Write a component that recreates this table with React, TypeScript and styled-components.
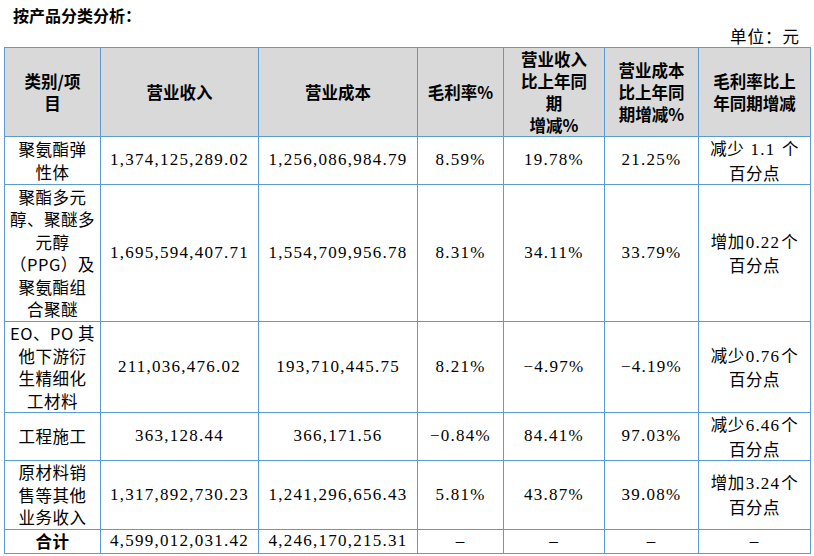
import React from "react";
import styled, { createGlobalStyle } from "styled-components";

const Global = createGlobalStyle`
  html, body { margin: 0; padding: 0; background: #fff; }
  body { font-family: "Noto Sans CJK SC", "Noto Sans", sans-serif; color: #000; }
`;

const Page = styled.div`
  width: 814px;
  height: 556px;
  overflow: hidden;
`;

const Title = styled.div`
  padding: 4px 0 0 13px;
  height: 22px;
  line-height: 22px;
  font-size: 16px;
  font-weight: 700;
`;

const Unit = styled.div`
  height: 20px;
  line-height: 20px;
  text-align: right;
  padding-right: 14px;
  font-size: 16.5px;
  letter-spacing: 1px;
`;

const Table = styled.table`
  margin: 1px 0 0 4px;
  width: 806px;
  border-collapse: collapse;
  table-layout: fixed;
`;

const HeadRow = styled.tr`
  height: 89px;
  background: #d9d9d9;
`;

const Row = styled.tr<{ $h: number }>`
  height: ${(p) => p.$h}px;
`;

const Th = styled.th`
  border: 1px solid #5b9bd5;
  padding: 0 2px;
  font-size: 16.5px;
  font-weight: 700;
  line-height: 22px;
  text-align: center;
  vertical-align: middle;
  white-space: nowrap;
`;

const Td = styled.td<{ $bold?: boolean; $num?: boolean }>`
  border: 1px solid #5b9bd5;
  padding: 0 2px;
  text-align: center;
  vertical-align: middle;
  white-space: nowrap;
  line-height: 22.5px;
  font-size: ${(p) => (p.$num ? "17px" : "16.5px")};
  font-weight: ${(p) => (p.$bold ? 700 : 400)};
  font-family: ${(p) =>
    p.$num
      ? `"Liberation Serif", "Noto Sans CJK SC", serif`
      : `"Noto Sans CJK SC", "Noto Sans", sans-serif`};
  letter-spacing: ${(p) => (p.$num ? "1.25px" : "0.5px")};
`;

const Num = styled.span`
  font-family: "Liberation Serif", serif;
  font-size: 17px;
  letter-spacing: 1.2px;
  padding: 0 1px;
`;

const Lines = ({ lines }: { lines: React.ReactNode[] }) => (
  <>
    {lines.map((l, i) => (
      <React.Fragment key={i}>
        {i > 0 && <br />}
        {l}
      </React.Fragment>
    ))}
  </>
);

const widths = [96, 158, 159, 86, 101, 94, 112];

type RowData = {
  h: number;
  name: React.ReactNode[];
  rev: string;
  cost: string;
  gm: string;
  revYoY: string;
  costYoY: string;
  change: React.ReactNode[];
};

const chg = (word: string, n: string) => [
  <>
    {word}
    <Num>{n}</Num>个
  </>,
  "百分点",
];

const rows: RowData[] = [
  {
    h: 46,
    name: ["聚氨酯弹", "性体"],
    rev: "1,374,125,289.02",
    cost: "1,256,086,984.79",
    gm: "8.59%",
    revYoY: "19.78%",
    costYoY: "21.25%",
    change: chg("减少", " 1.1 "),
  },
  {
    h: 137,
    name: ["聚酯多元", "醇、聚醚多", "元醇", "（PPG）及", "聚氨酯组", "合聚醚"],
    rev: "1,695,594,407.71",
    cost: "1,554,709,956.78",
    gm: "8.31%",
    revYoY: "34.11%",
    costYoY: "33.79%",
    change: chg("增加", "0.22"),
  },
  {
    h: 90,
    name: ["EO、PO 其", "他下游衍", "生精细化", "工材料"],
    rev: "211,036,476.02",
    cost: "193,710,445.75",
    gm: "8.21%",
    revYoY: "−4.97%",
    costYoY: "−4.19%",
    change: chg("减少", "0.76"),
  },
  {
    h: 45,
    name: ["工程施工"],
    rev: "363,128.44",
    cost: "366,171.56",
    gm: "−0.84%",
    revYoY: "84.41%",
    costYoY: "97.03%",
    change: chg("减少", "6.46"),
  },
  {
    h: 68,
    name: ["原材料销", "售等其他", "业务收入"],
    rev: "1,317,892,730.23",
    cost: "1,241,296,656.43",
    gm: "5.81%",
    revYoY: "43.87%",
    costYoY: "39.08%",
    change: chg("增加", "3.24"),
  },
];

export default function App() {
  return (
    <Page>
      <Global />
      <Title>按产品分类分析：</Title>
      <Unit>单位：元</Unit>
      <Table>
        <colgroup>
          {widths.map((w, i) => (
            <col key={i} style={{ width: w }} />
          ))}
        </colgroup>
        <tbody>
          <HeadRow>
            <Th>
              <Lines lines={["类别/项", "目"]} />
            </Th>
            <Th>营业收入</Th>
            <Th>营业成本</Th>
            <Th>毛利率%</Th>
            <Th>
              <Lines lines={["营业收入", "比上年同", "期", "增减%"]} />
            </Th>
            <Th>
              <Lines lines={["营业成本", "比上年同", "期增减%"]} />
            </Th>
            <Th>
              <Lines lines={["毛利率比上", "年同期增减"]} />
            </Th>
          </HeadRow>
          {rows.map((r, i) => (
            <Row key={i} $h={r.h}>
              <Td>
                <Lines lines={r.name} />
              </Td>
              <Td $num>{r.rev}</Td>
              <Td $num>{r.cost}</Td>
              <Td $num>{r.gm}</Td>
              <Td $num>{r.revYoY}</Td>
              <Td $num>{r.costYoY}</Td>
              <Td>
                <Lines lines={r.change} />
              </Td>
            </Row>
          ))}
          <Row $h={24}>
            <Td $bold>合计</Td>
            <Td $num>4,599,012,031.42</Td>
            <Td $num>4,246,170,215.31</Td>
            <Td $num>–</Td>
            <Td $num>–</Td>
            <Td $num>–</Td>
            <Td $num>–</Td>
          </Row>
        </tbody>
      </Table>
    </Page>
  );
}
